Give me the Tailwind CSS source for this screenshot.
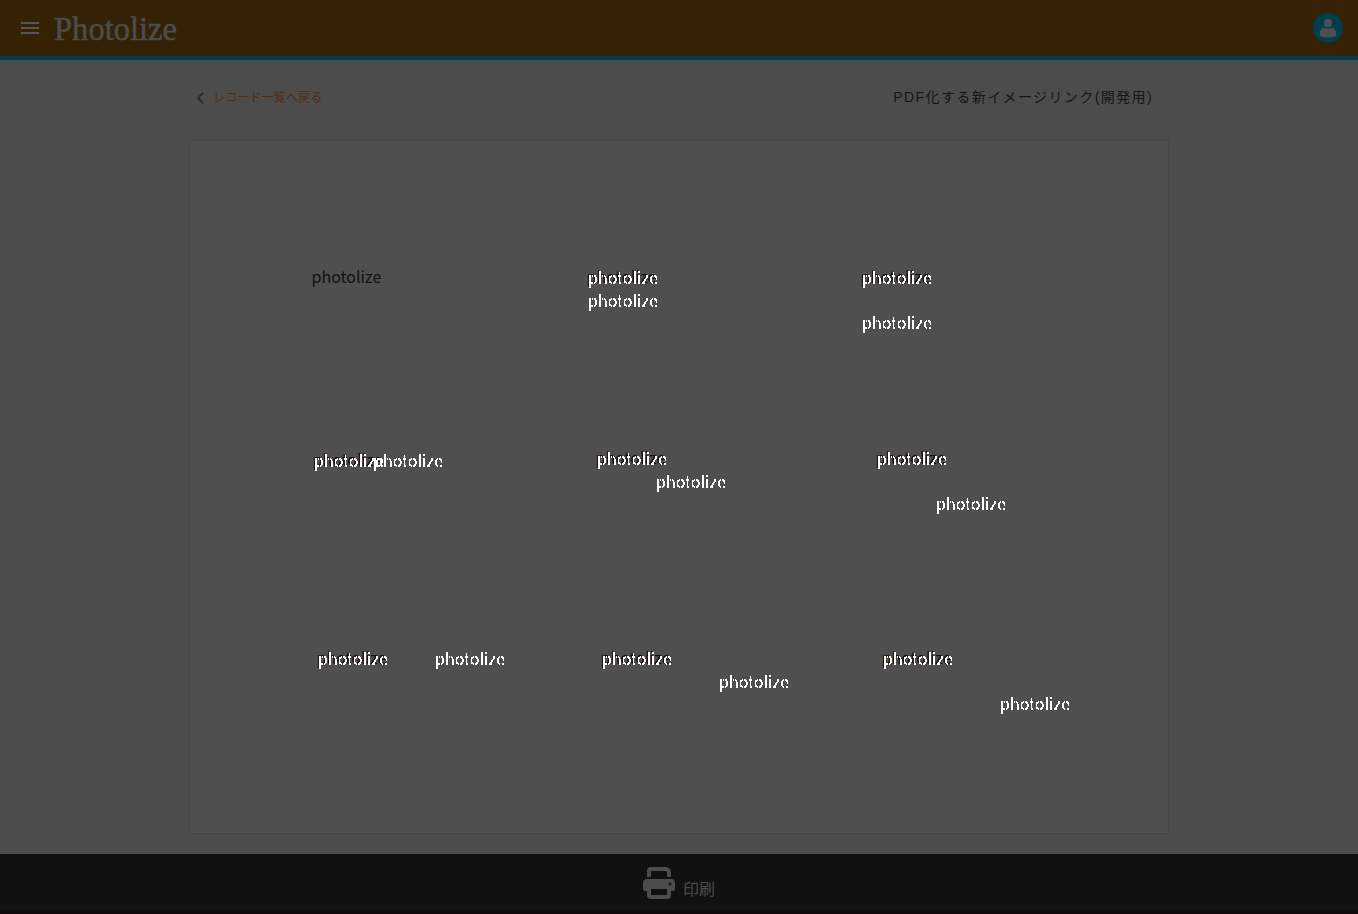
<!DOCTYPE html>
<html lang="ja">
<head>
<meta charset="utf-8">
<title>Photolize</title>
<script src="https://cdn.jsdelivr.net/npm/@tailwindcss/browser@4"></script>
</head>
<body class="h-[914px] w-[1358px] overflow-hidden bg-[#4c4c4c] font-['Liberation_Sans','Noto_Sans_CJK_JP',sans-serif] text-[#111]">
<!-- hard-edged lettering whose thin horizontal strokes drop out -->
<svg width="0" height="0" class="absolute"><filter id="crisp" x="0" y="0" width="1.05" height="1" color-interpolation-filters="sRGB"><feComponentTransfer result="hard"><feFuncA type="discrete" tableValues="0 0 1 1 1"/></feComponentTransfer><feOffset in="hard" dy="1" result="low"/><feComposite in="hard" in2="low" operator="in" result="both"/><feOffset in="both" dy="-1" result="up"/><feMerge><feMergeNode in="both"/><feMergeNode in="up"/></feMerge></filter></svg>
<div class="flex h-full flex-col">
  <header class="flex h-[60px] shrink-0 items-center justify-between border-b-4 border-[#003e50] bg-[#352104] pr-[15px] pl-[21px]">
    <div class="flex items-center">
      <svg width="18" height="12" fill="#555"><path d="M0 0h18v2H0zM0 5h18v2H0zM0 10h18v2H0z"/></svg>
      <svg width="130" height="40" class="ml-[14px]"><text x="1" y="32" textLength="123" lengthAdjust="spacingAndGlyphs" font-family="Liberation Serif" font-size="34" fill="#4c4c4c" stroke="#4c4c4c" stroke-width=".6">Photolize</text></svg>
    </div>
    <svg width="30" height="30"><circle cx="15" cy="15" r="15" fill="#003e50"/><circle cx="15" cy="10" r="4.2" fill="#4f4f4f"/><path d="M7 23v-2.500c0-4 2-5.500 4.500-5.500q3.500 1.500 7 0c2.500 0 4.500 1.500 4.500 5.500V23q-8 3-16 0z" fill="#4f4f4f"/></svg>
  </header>
  <main class="mx-auto flex w-[980px] grow flex-col">
    <div class="flex h-[80px] items-center justify-between pr-[16px] pl-[7px] pb-[5px]">
      <a class="flex items-center text-[12px] leading-4 tracking-[0.15px] text-[#4f2f12]"><svg width="8" height="12" class="mt-[1px] mr-[9px]" fill="none" stroke="#2b2b2b" stroke-width="2"><path d="M7 1L2 6l5 5"/></svg>レコード一覧へ戻る</a>
      <h1 class="text-[14px] tracking-[1.4px] whitespace-nowrap text-[#151515]">PDF化する新イメージリンク(開発用)</h1>
    </div>
    <section id="canvas" class="relative h-[694px] border border-[#464646] bg-[#4f4f4f] font-['Noto_Sans_CJK_JP',sans-serif] text-[16px] leading-6"></section>
  </main>
  <footer class="flex h-[60px] shrink-0 items-center justify-center gap-2 border-b-3 border-[#14090c] bg-[#111] text-[#4c4c4c]">
    <svg width="32" height="32" viewBox="0 0 32 32"><path fill="#4c4c4c" fill-rule="evenodd" d="M4 10V4q0-4 4-4h14q6 0 6 6v4h-4V6q0-2-2-2H8v6zM4 12h24q4 0 4 4v6q0 2-2 2h-2v4q0 4-4 4H8q-4 0-4-4v-4H2q-2 0-2-2v-6q0-4 4-4zM8 22v6h16v-6z"/><circle cx="27" cy="17" r="1.600" fill="#111"/></svg>
    <span class="mt-[15px] text-[16px] leading-6">印刷</span>
  </footer>
</div>
<script>
// [x, line-box top, dark layer]
const labels = [
  [312,265,1],
  [587,265,1],[588,266,0],[588,289,0],
  [861,265,1],[862,266,0],[862,311,0],
  [313,448,1],[314,449,0],[373,449,0],
  [596,446,1],[597,447,0],[656,470,0],
  [876,446,1],[877,447,0],[936,492,0],
  [317,646,1],[318,647,0],[435,647,0],
  [601,646,1],[602,647,0],[719,670,0],
  [882,646,1],[883,647,0],[1000,692,0]
];
const canvas = document.getElementById('canvas');
for (const [x, y, dark] of labels) {
  const s = document.createElement('span');
  s.textContent = 'photolize';
  s.className = dark ? 'absolute text-[#111]' : 'absolute text-white';
  if (!dark) s.style.filter = 'url(#crisp)';
  s.style.left = (x - 191 + (dark ? 0.5 : 1)) + 'px';
  s.style.top = (y - 142) + 'px';
  canvas.appendChild(s);
}
</script>
</body>
</html>
